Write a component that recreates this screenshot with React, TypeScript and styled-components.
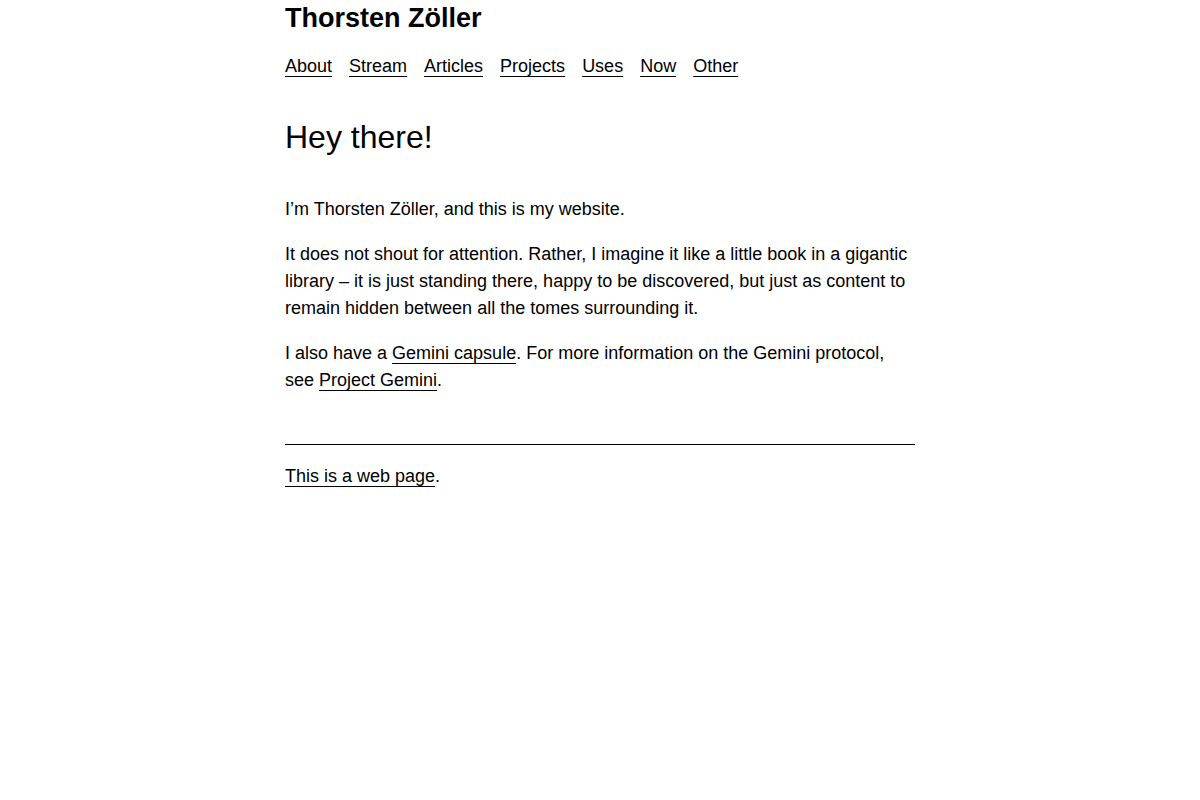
import styled, { createGlobalStyle } from "styled-components";

const GlobalStyle = createGlobalStyle`
  html, body {
    margin: 0;
    padding: 0;
    background: #fff;
  }
  body {
    font-family: "Liberation Sans", Arial, sans-serif;
    font-size: 18px;
    line-height: 27px;
    color: #000;
  }
`;

const Page = styled.div`
  width: 630px;
  margin: 0 auto;
`;

const Header = styled.header`
  display: flex;
  flex-direction: column;
`;

const SiteTitle = styled.div`
  font-size: 27px;
  font-weight: bold;
  line-height: 32px;
  margin-top: 2px;
`;

const Nav = styled.nav`
  display: flex;
  gap: 17px;
  margin-top: 19px;
`;

const Link = styled.a`
  color: inherit;
  text-decoration: underline;
  text-underline-offset: 4px;
  text-decoration-thickness: 1px;
`;

const Heading = styled.h1`
  font-size: 32px;
  font-weight: normal;
  line-height: 38px;
  margin: 38px 0 40px;
`;

const Para = styled.p`
  margin: 0 0 18px;
`;

const Rule = styled.hr`
  border: 0;
  border-top: 1.5px solid #000;
  margin: 50px 0 18px;
`;

const Footer = styled.footer``;

const navItems = ["About", "Stream", "Articles", "Projects", "Uses", "Now", "Other"];

export default function App() {
  return (
    <>
      <GlobalStyle />
      <Page>
        <Header>
          <SiteTitle>Thorsten Zöller</SiteTitle>
          <Nav>
            {navItems.map((n) => (
              <Link key={n} href="#">
                {n}
              </Link>
            ))}
          </Nav>
        </Header>
        <main>
          <Heading>Hey there!</Heading>
          <Para>I’m Thorsten Zöller, and this is my website.</Para>
          <Para>
            It does not shout for attention. Rather, I imagine it like a little book in a gigantic
            library – it is just standing there, happy to be discovered, but just as content to
            remain hidden between all the tomes surrounding it.
          </Para>
          <Para>
            I also have a <Link href="#">Gemini capsule</Link>. For more information on the Gemini
            protocol, see <Link href="#">Project Gemini</Link>.
          </Para>
        </main>
        <Rule />
        <Footer>
          <Link href="#">This is a web page</Link>.
        </Footer>
      </Page>
    </>
  );
}
